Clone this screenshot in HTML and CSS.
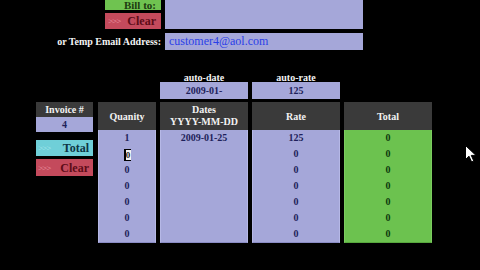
FILE: index.html
```html
<!DOCTYPE html>
<html>
<head>
<meta charset="utf-8">
<link rel="stylesheet" href="styles.css">
</head>
<body>
<div class="page">
  <div class="top">
    <div class="btn-stack">
      <div class="btn btn-green"><span class="btn-txt green-txt">Bill to:</span></div>
      <div class="btn btn-red"><span class="arr">&gt;&gt;&gt;</span><span class="btn-txt red-txt">Clear</span></div>
    </div>
    <div class="billbox"></div>
    <div class="email-lbl">or Temp Email Address:</div>
    <div class="email">customer4@aol.com</div>
  </div>

  <div class="grid">
    <div class="auto a-date">
      <div class="auto-lbl">auto-date</div>
      <div class="auto-box">2009-01-</div>
    </div>
    <div class="auto a-rate">
      <div class="auto-lbl">auto-rate</div>
      <div class="auto-box">125</div>
    </div>

    <div class="left">
      <div class="inv-hd">Invoice #</div>
      <div class="inv-box">4</div>
      <div class="lbtn btn-cyan"><span class="arr arr-cyan">&gt;&gt;&gt;</span><span class="btn-txt cyan-txt">Total</span></div>
      <div class="lbtn btn-red2"><span class="arr">&gt;&gt;&gt;</span><span class="btn-txt red-txt">Clear</span></div>
    </div>

    <div class="col">
      <div class="hd">Quanity</div>
      <div class="bd">
        <div class="row">1</div>
        <div class="row"><span class="caret">0</span></div>
        <div class="row">0</div>
        <div class="row">0</div>
        <div class="row">0</div>
        <div class="row">0</div>
        <div class="row">0</div>
      </div>
    </div>

    <div class="col">
      <div class="hd hd2">Dates<br>YYYY-MM-DD</div>
      <div class="bd">
        <div class="row">2009-01-25</div>
      </div>
    </div>

    <div class="col">
      <div class="hd">Rate</div>
      <div class="bd">
        <div class="row">125</div>
        <div class="row">0</div>
        <div class="row">0</div>
        <div class="row">0</div>
        <div class="row">0</div>
        <div class="row">0</div>
        <div class="row">0</div>
      </div>
    </div>

    <div class="col">
      <div class="hd">Total</div>
      <div class="bd bd-green">
        <div class="row">0</div>
        <div class="row">0</div>
        <div class="row">0</div>
        <div class="row">0</div>
        <div class="row">0</div>
        <div class="row">0</div>
        <div class="row">0</div>
      </div>
    </div>
  </div>

  <svg class="pointer" width="12" height="18" viewBox="0 0 12 18">
    <path d="M0.5 0.5 L0.5 14.5 L4 11.2 L6.6 17 L8.8 16 L6.3 10.4 L11 10.4 Z" fill="#fff" stroke="#000" stroke-width="1"/>
  </svg>
</div>
</body>
</html>
```

FILE: styles.css
```css
html, body {
  margin: 0;
  padding: 0;
  background: #000;
}
body {
  width: 480px;
  height: 270px;
  overflow: hidden;
  font-family: "Liberation Serif", "Times New Roman", serif;
  font-weight: bold;
}
.page {
  position: relative;
  width: 480px;
  height: 270px;
  overflow: hidden;
}

/* top section */
.top {
  display: grid;
  grid-template-columns: 161px 198px;
  column-gap: 4px;
  row-gap: 4px;
}
.btn-stack {
  display: flex;
  flex-direction: column;
  align-items: flex-end;
  gap: 3px;
}
.btn {
  width: 56px;
  box-sizing: border-box;
  display: flex;
  align-items: center;
  justify-content: flex-end;
  padding-right: 5px;
  font-size: 12px;
}
.btn-green {
  height: 10px;
  background: #6fc350;
  font-size: 11px;
  line-height: 10px;
}
.btn-green .btn-txt { line-height: 10px; }
.btn-red {
  height: 16px;
  background: #c44a5c;
  justify-content: space-between;
  padding-left: 3px;
}
.btn-txt { line-height: 12px; }
.green-txt { color: #1d3b10; }
.red-txt { color: #5c0c18; }
.cyan-txt { color: #0d3444; }
.arr {
  color: #f4aabb;
  font-size: 9px;
  font-weight: normal;
  letter-spacing: -1px;
  opacity: 0.85;
}
.arr-cyan { color: #b8eef2; }
.billbox {
  height: 29px;
  background: #a5a7d9;
}
.email-lbl {
  color: #f4f4f4;
  font-size: 10px;
  text-align: right;
  line-height: 17px;
}
.email {
  height: 17px;
  line-height: 17px;
  background: #a5a7d9;
  color: #2a40e8;
  font-weight: normal;
  font-size: 12px;
  padding-left: 4px;
}

/* main grid */
.grid {
  display: grid;
  grid-template-columns: 58px 58px 88px 88px 88px;
  column-gap: 4px;
  row-gap: 3px;
  padding-left: 36px;
  margin-top: 23px;
}
.auto { grid-row: 1; }
.a-date { grid-column: 3; }
.a-rate { grid-column: 4; }
.auto-lbl {
  color: #f4f4f4;
  font-size: 10px;
  line-height: 9px;
  height: 9px;
  text-align: center;
}
.auto-box {
  height: 17px;
  line-height: 17px;
  background: #a5a7d9;
  color: #1e1f5a;
  font-size: 10px;
  text-align: center;
}

.left {
  grid-row: 2;
  grid-column: 1;
  width: 57px;
  display: flex;
  flex-direction: column;
}
.inv-hd {
  height: 15px;
  line-height: 15px;
  background: #3a3a3a;
  color: #f2f2f2;
  font-size: 10px;
  text-align: center;
}
.inv-box {
  height: 15px;
  line-height: 15px;
  background: #a5a7d9;
  color: #1e1f5a;
  font-size: 10px;
  text-align: center;
}
.lbtn {
  display: flex;
  align-items: center;
  justify-content: space-between;
  padding: 0 4px 0 2px;
  font-size: 12px;
}
.btn-cyan {
  margin-top: 8px;
  height: 16px;
  background: #6fcfd8;
}
.btn-red2 {
  margin-top: 3px;
  height: 17px;
  background: #c44a5c;
}

.col {
  grid-row: 2;
  display: flex;
  flex-direction: column;
}
.hd {
  height: 28px;
  background: #3a3a3a;
  color: #f2f2f2;
  font-size: 10px;
  display: flex;
  align-items: center;
  justify-content: center;
  text-align: center;
}
.hd2 { line-height: 12px; }
.bd {
  height: 113px;
  box-sizing: border-box;
  background: #a5a7d9;
  border: 1px solid #b6b8e6;
  border-top: none;
  border-bottom: 1px solid #8a8cc4;
  color: #1e1f5a;
  font-size: 10px;
}
.bd-green {
  background: #6cc24f;
  border-color: #7ccc60;
  border-bottom-color: #58a83e;
  color: #0d3a0d;
}
.row {
  height: 16px;
  line-height: 16px;
  text-align: center;
}
.caret {
  display: inline-block;
  width: 5px;
  height: 10px;
  line-height: 10px;
  background: #f4f4f4;
  border: 1px solid #000;
  border-left-width: 2px;
  border-right: none;
  color: #222;
  font-size: 9px;
  vertical-align: middle;
}

.pointer {
  position: absolute;
  left: 465px;
  top: 145px;
}
```
